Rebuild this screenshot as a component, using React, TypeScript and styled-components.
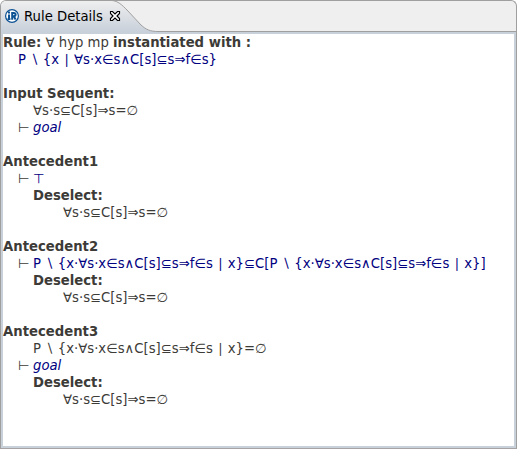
import React from "react";
import styled, { createGlobalStyle } from "styled-components";

const Global = createGlobalStyle`
  html, body { margin: 0; padding: 0; background: #fff; }
  body { overflow: hidden; font-family: "DejaVu Sans", sans-serif; font-size: 13.23px; }
`;

const Panel = styled.section`
  box-sizing: border-box;
  width: 517px;
  height: 449px;
  display: flex;
  flex-direction: column;
  border: 1px solid #9f9f9f;
  border-bottom-color: #a7a3a5;
  border-radius: 6px 6px 0 0;
  background: #efefef;
  overflow: hidden;
`;

const TabBar = styled.header`
  height: 31px;
  flex: none;
  display: grid;
`;

const TabShape = styled.svg`
  grid-area: 1 / 1;
  display: block;
`;

const TabContent = styled.div`
  grid-area: 1 / 1;
  height: 30px;
  display: flex;
  align-items: center;
  padding-left: 3px;
  color: #000;
`;

const TabTitle = styled.span`
  margin: 0 7px 0 4px;
  width: 78px;
  white-space: nowrap;
`;

const Body = styled.main`
  flex: 1;
  box-sizing: border-box;
  border: 2px solid #c8d0da;
  background: #fff;
  color: #3c3b37;
`;

const Line = styled.div<{ $indent?: number }>`
  height: 17px;
  line-height: 17px;
  padding-left: ${(p) => p.$indent ?? 0}px;
  white-space: pre;
`;

const Strong = styled.b`
  font-weight: 700;
`;

const Formula = styled.span<{ $goal?: boolean }>`
  color: ${(p) => (p.$goal ? "#000080" : "inherit")};
`;

const Turnstile = styled.span`
  display: inline-block;
  width: 15px;
`;

const GoalName = styled.em`
  color: #000080;
`;

const RuleIcon = () => (
  <svg width="16" height="16" viewBox="0 0 16 16">
    <circle cx="8" cy="8" r="6.4" fill="#fff" stroke="#0c5193" strokeWidth="1.2" />
    <g fill="none" stroke="#0c5193" strokeWidth="2">
      <path d="M5 6.6v4.8M5 3.6v2M8.2 11.8V5h1.6c2.4 0 2.4 3.2 0 3.2H8.2M9.8 8.2l1.8 3.2M3.6 11h2.8" />
    </g>
  </svg>
);

const CloseIcon = () => (
  <svg width="12" height="12" viewBox="0 0 12 12">
    <path
      d="M1.5 1.5h2l2.5 2.5 2.5-2.5h2v2l-2.5 2.5 2.5 2.5v2h-2l-2.5-2.5-2.5 2.5h-2v-2l2.5-2.5-2.5-2.5z"
      fill="#fff"
      stroke="#000"
      strokeWidth="1.15"
    />
  </svg>
);

const Deselect = () => (
  <>
    <Line $indent={30}><Strong>Deselect:</Strong></Line>
    <Line $indent={60}><Formula>∀s·s⊆C[s]⇒s=∅</Formula></Line>
  </>
);

const Goal = () => (
  <Line $indent={15}><Turnstile>⊢</Turnstile><GoalName>goal</GoalName></Line>
);

export default function App() {
  return (
    <>
      <Global />
      <Panel>
        <TabBar>
          <TabShape width="515" height="31" viewBox="1 1 515 31">
            <defs>
              <linearGradient id="tab" x1="0" y1="0" x2="0" y2="1">
                <stop offset="0" stopColor="#efefef" />
                <stop offset="1" stopColor="#c8d0da" />
              </linearGradient>
            </defs>
            <path d="M0 32V.5H112C118 1 122 5 127 10L141 25C146 29.5 150 31.5 158 31.5V32Z" fill="url(#tab)" />
            <path d="M112 .5C118 1 122 5 127 10L141 25C146 29.5 150 31.5 158 31.5H516" fill="none" stroke="#9f9f9f" />
          </TabShape>
          <TabContent>
            <RuleIcon />
            <TabTitle>Rule Details</TabTitle>
            <CloseIcon />
          </TabContent>
        </TabBar>
        <Body>
          <Line><Strong>Rule:</Strong> ∀ hyp mp <Strong>instantiated with :</Strong></Line>
          <Line $indent={15}><Formula $goal>{"P ∖ {x ∣ ∀s·x∈s∧C[s]⊆s⇒f∈s}"}</Formula></Line>
          <Line />
          <Line><Strong>Input Sequent:</Strong></Line>
          <Line $indent={30}><Formula>∀s·s⊆C[s]⇒s=∅</Formula></Line>
          <Goal />
          <Line />
          <Line><Strong>Antecedent1</Strong></Line>
          <Line $indent={15}><Turnstile>⊢</Turnstile><Formula $goal>⊤</Formula></Line>
          <Deselect />
          <Line />
          <Line><Strong>Antecedent2</Strong></Line>
          <Line $indent={15}>
            <Turnstile>⊢</Turnstile>
            <Formula $goal>{"P ∖ {x·∀s·x∈s∧C[s]⊆s⇒f∈s ∣ x}⊆C[P ∖ {x·∀s·x∈s∧C[s]⊆s⇒f∈s ∣ x}]"}</Formula>
          </Line>
          <Deselect />
          <Line />
          <Line><Strong>Antecedent3</Strong></Line>
          <Line $indent={30}><Formula>{"P ∖ {x·∀s·x∈s∧C[s]⊆s⇒f∈s ∣ x}=∅"}</Formula></Line>
          <Goal />
          <Deselect />
        </Body>
      </Panel>
    </>
  );
}
